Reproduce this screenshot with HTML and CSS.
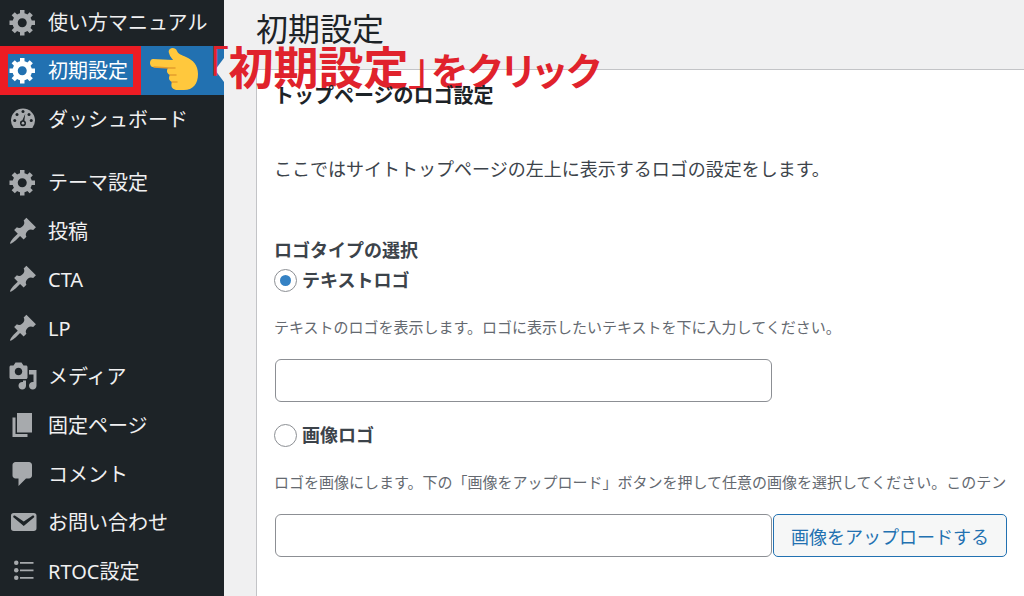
FILE: index.html
```html
<!DOCTYPE html>
<html lang="ja">
<head>
<meta charset="utf-8">
<meta name="viewport" content="width=device-width, initial-scale=1">
<title>初期設定</title>
<link rel="stylesheet" href="styles.css">
</head>
<body>
<svg class="symbols" aria-hidden="true">
  <symbol id="gear" viewBox="0 0 20 20"><path d="M18 12h-2.18c-.17.7-.44 1.35-.81 1.93l1.54 1.54-2.1 2.1-1.54-1.54c-.58.36-1.23.63-1.91.79V19H8v-2.18c-.68-.16-1.33-.43-1.91-.79l-1.54 1.54-2.12-2.12 1.54-1.54c-.36-.58-.63-1.23-.79-1.91H1V9.03h2.17c.16-.7.44-1.35.8-1.94L2.43 5.55l2.1-2.1 1.54 1.54c.58-.37 1.24-.64 1.93-.81V2h3v2.18c.68.16 1.33.43 1.91.79l1.54-1.54 2.12 2.12-1.54 1.54c.36.59.64 1.24.8 1.94H18V12zm-8.5 1.5c1.66 0 3-1.34 3-3s-1.34-3-3-3-3 1.34-3 3 1.34 3 3 3z"/></symbol>
  <symbol id="pin" viewBox="0 0 20 20"><path d="M10.44 3.02l1.82-1.82 6.36 6.35-1.83 1.82c-1.05-.68-2.48-.57-3.41.36l-.75.75c-.92.93-1.04 2.35-.35 3.41l-1.83 1.82-2.41-2.41-2.8 2.79c-.42.42-3.38 2.71-3.8 2.29s1.86-3.39 2.28-3.81l2.79-2.79L4.1 9.36l1.83-1.82c1.05.69 2.48.57 3.4-.36l.75-.75c.93-.92 1.05-2.35.36-3.41z"/></symbol>
</svg>
<div class="layout">
  <nav class="sidebar" aria-label="管理メニュー">
    <ul class="menu menu-top">
      <li><a class="item" href="#"><svg class="icon"><use href="#gear"/></svg>使い方マニュアル</a></li>
      <li><a class="item current" href="#" aria-current="page"><svg class="icon"><use href="#gear"/></svg>初期設定
        <span class="frame"></span>
        <svg class="hand" viewBox="0 0 50 44" aria-hidden="true">
          <path fill="#ffc83d" d="M4 11C0 11 0 19 4 19l15 1c-2 3-1 6 2 7-2 3-1 6 2 7-2 5 1 8 6 8h6c9 0 14-6 14-16 0-9-5-14-12-17-4-2-8-3-9-6-2-5-10-3-8 2 1 4 3 5 4 7z"/>
          <path fill="none" stroke="#e59d2c" stroke-width="1.5" stroke-linecap="round" d="M5 19l15 1h6M21 27h6M23 34h5"/>
        </svg></a></li>
      <li><a class="item" href="#"><svg class="icon" viewBox="0 0 20 20"><path d="M3.76 16h12.48A8 8 0 1 0 3.76 16z"/><g class="cut"><circle cx="10" cy="5" r="1"/><circle cx="6" cy="7" r="1"/><circle cx="14" cy="7" r="1"/><circle cx="4.5" cy="11" r="1"/><circle cx="15.500" cy="11" r="1"/><path d="M11.500 6.500L10.900 11c.8.4 1.200 1.100 1.100 1.900a2 2 0 1 1-2.400-2z"/></g><circle cx="10" cy="12.800" r=".9"/></svg>ダッシュボード</a></li>
    </ul>
    <ul class="menu menu-main">
      <li><a class="item" href="#"><svg class="icon"><use href="#gear"/></svg>テーマ設定</a></li>
      <li><a class="item" href="#"><svg class="icon"><use href="#pin"/></svg>投稿</a></li>
      <li><a class="item" href="#"><svg class="icon"><use href="#pin"/></svg>CTA</a></li>
      <li><a class="item" href="#"><svg class="icon"><use href="#pin"/></svg>LP</a></li>
      <li><a class="item" href="#"><svg class="icon" viewBox="0 0 20 20"><path d="M13 11V4c0-.55-.45-1-1-1h-1.67L9 1H5L3.67 3H2c-.55 0-1 .45-1 1v7c0 .55.45 1 1 1h10c.55 0 1-.45 1-1zM7 4.5c1.38 0 2.5 1.12 2.500 2.500S8.380 9.500 7 9.500 4.500 8.380 4.500 7 5.620 4.500 7 4.500zM14 6h5v10.500c0 1.380-1.120 2.500-2.500 2.500S14 17.880 14 16.500s1.120-2.500 2.500-2.500c.17 0 .34.02.5.05V9h-3V6zm-4 8.050V13h2v3.500c0 1.380-1.120 2.500-2.500 2.500S7 17.880 7 16.500 8.120 14 9.500 14c.17 0 .34.02.5.05z"/></svg>メディア</a></li>
      <li><a class="item" href="#"><svg class="icon" viewBox="0 0 20 20"><path d="M6 15V2h10v13H6zm-1 1h8v2H3V5h2v11z"/></svg>固定ページ</a></li>
      <li><a class="item" href="#"><svg class="icon" viewBox="0 0 20 20"><path d="M5 2h9c1.100 0 2 .9 2 2v7c0 1.100-.9 2-2 2h-2l-5 5v-5H5c-1.100 0-2-.9-2-2V4c0-1.100.9-2 2-2z"/></svg>コメント</a></li>
      <li><a class="item" href="#"><svg class="icon" viewBox="0 0 20 20"><path d="M3.870 4h13.250C18.370 4 19 4.590 19 5.790v8.420c0 1.190-.63 1.790-1.880 1.790H3.870c-1.250 0-1.880-.6-1.880-1.790V5.790c0-1.200.63-1.790 1.880-1.790zm6.620 8.600l6.740-5.530c.24-.2.43-.66.13-1.070-.29-.41-.82-.42-1.170-.17l-5.700 3.860L4.800 5.830c-.35-.25-.88-.24-1.170.17-.3.41-.11.87.13 1.070z"/></svg>お問い合わせ</a></li>
      <li><a class="item" href="#"><svg class="icon" viewBox="0 0 20 20"><circle cx="5.500" cy="4.500" r="1.500"/><circle cx="5.500" cy="9.500" r="1.500"/><circle cx="5.500" cy="14.500" r="1.500"/><path d="M8 4h9v1.200H8zM8 9h9v1.200H8zM8 14h9v1.200H8z"/></svg>RTOC設定</a></li>
    </ul>
  </nav>
  <main class="content">
    <h1 class="title">初期設定</h1>
    <p class="callout"><span class="bracket">「</span>初期設定<span class="bracket">」</span><span class="kana">をクリック</span></p>
    <form class="panel">
      <h2 class="heading">トップページのロゴ設定</h2>
      <p class="intro">ここではサイトトップページの左上に表示するロゴの設定をします。</p>
      <fieldset class="choices">
        <legend class="legend">ロゴタイプの選択</legend>
        <label class="choice"><input class="radio" type="radio" name="logo" checked>テキストロゴ</label>
        <p class="note">テキストのロゴを表示します。ロゴに表示したいテキストを下に入力してください。</p>
        <div class="field"><input class="text" type="text" aria-label="テキストロゴ"></div>
        <label class="choice"><input class="radio" type="radio" name="logo">画像ロゴ</label>
        <p class="note">ロゴを画像にします。下の「画像をアップロード」ボタンを押して任意の画像を選択してください。このテン</p>
        <div class="field"><input class="text" type="text" aria-label="画像ロゴ"><button class="upload" type="button">画像をアップロードする</button></div>
      </fieldset>
    </form>
  </main>
</div>
</body>
</html>
```
FILE: styles.css
```css
* { box-sizing: border-box; }
body {
  margin: 0;
  background: #f0f0f1;
  color: #3c434a;
  font-family: "Noto Sans", "Noto Sans CJK JP", sans-serif;
}
h1, h2, p, ul, fieldset { margin: 0; padding: 0; }
.symbols { display: none; }
.layout { display: flex; min-height: 100vh; }

.sidebar {
  flex: 0 0 224px;
  display: flex;
  flex-direction: column;
  gap: 15px;
  background: #1d2327;
}
.menu { display: grid; list-style: none; }
.menu-top { grid-template-rows: 46px 49px 49px; }
.menu-main { flex: 1; grid-auto-rows: 1fr; }
.item {
  position: relative;
  display: flex;
  align-items: center;
  gap: 10px;
  height: 100%;
  padding-left: 8px;
  color: #f0f0f1;
  font-size: 20px;
  line-height: 30px;
  text-decoration: none;
  white-space: nowrap;
}
.icon { flex: none; width: 30px; height: 30px; margin-bottom: 2px; fill: #a7aaad; }
.cut { fill: #1d2327; }
.current { background: #2271b1; color: #fff; }
.current .icon { fill: #fff; }
.current::after {
  content: "";
  position: absolute;
  right: 0;
  top: 12px;
  border: 12px solid transparent;
  border-left: 0;
  border-right: 9px solid #f0f0f1;
}
.frame {
  position: absolute;
  inset: 0 auto 0 0;
  width: 141px;
  border: 8px solid #ed1c24;
}
.hand { position: absolute; left: 149px; top: 2px; width: 50px; height: 44px; }

.content { position: relative; flex: 1; min-width: 0; padding: 5px 0 0 32px; display: flex; flex-direction: column; }
.title { color: #1d2327; font-size: 32px; font-weight: 400; line-height: 48px; }
.callout {
  position: absolute;
  left: -18px;
  top: 38px;
  z-index: 1;
  color: #e0222c;
  font-size: 45px;
  font-weight: 700;
  line-height: 60px;
  font-feature-settings: "palt";
  white-space: nowrap;
}
.bracket { font-weight: 400; }
.kana { font-size: 38px; }
.panel {
  flex: 1;
  margin-top: 16px;
  padding: 11px 0 0 17px;
  background: #fff;
  border: 1px solid #c3c4c7;
  border-width: 1px 0 0 1px;
}
.heading { position: relative; z-index: 2; color: #1d2327; font-size: 20px; line-height: 30px; }
.intro { margin-top: 44px; font-size: 18px; line-height: 28px; }
.choices { margin-top: 52px; border: 0; min-width: 0; }
.legend, .choice { padding: 0; font-size: 18px; font-weight: 700; line-height: 30px; }
.choice { display: flex; align-items: center; gap: 5px; }
.radio {
  appearance: none;
  flex: none;
  display: grid;
  place-items: center;
  width: 23px;
  height: 23px;
  margin: 0;
  border: 1px solid #8c8f94;
  border-radius: 50%;
  background: #fff;
}
.radio:checked::before { content: ""; width: 11px; height: 11px; border-radius: 50%; background: #3582c4; }
.note { margin-top: 18px; color: #646970; font-size: 15px; line-height: 28px; white-space: nowrap; overflow: hidden; }
.field { display: flex; gap: 1px; margin: 18px 17px 18px 1px; }
.text {
  flex: 0 1 497px;
  min-width: 0;
  height: 43px;
  padding: 0 12px;
  border: 1px solid #8c8f94;
  border-radius: 6px;
  background: #fff;
  font: inherit;
}
.upload {
  flex: none;
  height: 43px;
  padding: 0 17px;
  border: 1px solid #2271b1;
  border-radius: 5px;
  background: #f6f7f7;
  color: #2271b1;
  font: inherit;
  font-size: 18px;
}
```
